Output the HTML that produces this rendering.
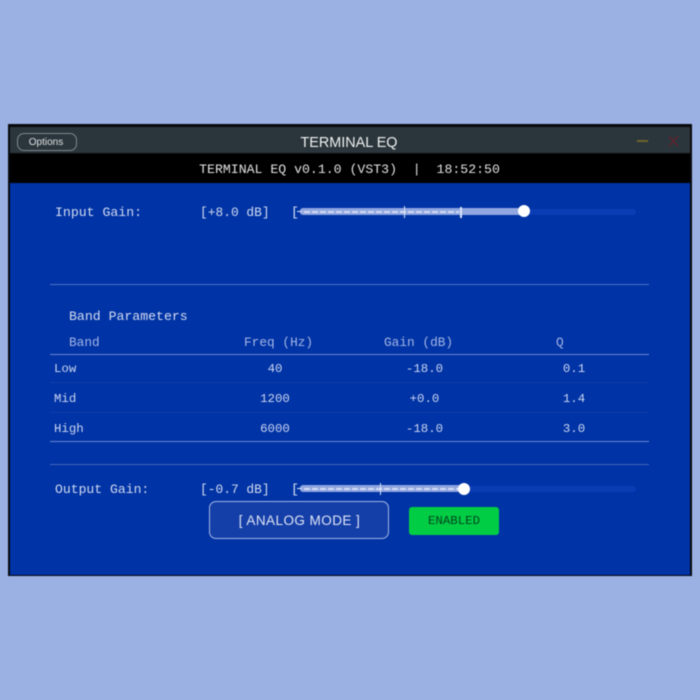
<!DOCTYPE html>
<html><head><meta charset="utf-8"><style>
html,body{margin:0;padding:0;width:700px;height:700px;overflow:hidden;background:#9bb0e3}
#w{position:absolute;left:0;top:0;width:700px;height:700px;filter:blur(.4px)}
.a{position:absolute}
.t{position:absolute;font:13.2px/16px "Liberation Mono",monospace;white-space:pre;color:#d3dcf2}
.h{font-size:12.8px;color:#a4b6e6}
.r{font-size:12.4px;color:#cbd6f2}
.v{font-size:12.9px}
.c{transform:translateX(-50%)}
.s{font-family:"Liberation Sans",sans-serif}
.l{position:absolute;left:50px;width:599px;height:1px}
.d{position:absolute;height:2px;background:repeating-linear-gradient(90deg,#d3dcf5 0 6px,#8fa6e0 6px 8px)}
</style></head><body><div id="w">
<div class="a" style="left:8.3px;top:124px;width:683.4px;height:452.3px;background:#08090c"></div>
<div class="a" style="left:9.5px;top:127px;width:680.5px;height:26px;background:#2b363c"></div>
<div class="a" style="left:9.5px;top:153.5px;width:680.5px;height:29.5px;background:#000"></div>
<div class="a" style="left:9.5px;top:183px;width:680.5px;height:391.5px;background:#0033a5"></div>

<div class="a" style="left:16.5px;top:133px;width:58px;height:16px;border:1.5px solid #7d878c;border-radius:7px"></div>
<div class="t s c" style="left:46px;top:134.5px;font-size:10px;color:#dfe3e5">Options</div>
<div class="t s c" style="left:349px;top:133.5px;font-size:14.4px;line-height:18px;color:#eef0f0">TERMINAL EQ</div>
<div class="a" style="left:637px;top:140px;width:11px;height:2px;background:#6f6428"></div>
<svg class="a" style="left:667px;top:134px" width="13" height="14"><path d="M2 2L11 12M11 2L2 12" stroke="#5e2530" stroke-width="1.6" fill="none"/></svg>
<div class="t c" style="left:349.5px;top:161.5px;color:#e2e2e2;font-size:13.2px">TERMINAL EQ v0.1.0 (VST3)  |  18:52:50</div>

<div class="t" style="left:55px;top:204.5px">Input Gain:</div>
<div class="t v" style="left:200px;top:204.5px">[+8.0 dB]</div>
<div class="a" style="left:300px;top:208.5px;width:336px;height:6px;background:#0a3cb4;border-radius:3px"></div>
<div class="a" style="left:300px;top:208px;width:224px;height:7px;background:#8fa6e0;border-radius:3px"></div>
<div class="t" style="left:291px;top:204.5px;color:#dbe3f6">[</div>
<div class="a" style="left:297px;top:211px;width:5px;height:1.4px;background:#dbe3f6"></div>
<div class="d" style="left:304px;top:210.5px;width:155px"></div>
<div class="a" style="left:404px;top:206px;width:1.3px;height:12px;background:#dbe3f6"></div>
<div class="a" style="left:460px;top:206.5px;width:2px;height:11px;background:#dbe3f6"></div>
<div class="a" style="left:518px;top:205px;width:12px;height:12px;background:#fff;border-radius:50%"></div>

<div class="l" style="top:283.5px;background:#4f70c4"></div>
<div class="t" style="left:69px;top:308.5px">Band Parameters</div>
<div class="t h" style="left:69px;top:334.5px">Band</div>
<div class="t h" style="left:244px;top:334.5px">Freq (Hz)</div>
<div class="t h" style="left:384px;top:334.5px">Gain (dB)</div>
<div class="t h" style="left:556px;top:334.5px">Q</div>
<div class="l" style="top:353.5px;background:#6a88d2"></div>

<div class="t r" style="left:54px;top:360.5px">Low</div>
<div class="t r c" style="left:275px;top:360.5px">40</div>
<div class="t r c" style="left:424.5px;top:360.5px">-18.0</div>
<div class="t r c" style="left:574px;top:360.5px">0.1</div>
<div class="l" style="top:382px;background:#0f3dab"></div>

<div class="t r" style="left:54px;top:390.5px">Mid</div>
<div class="t r c" style="left:275px;top:390.5px">1200</div>
<div class="t r c" style="left:424.5px;top:390.5px">+0.0</div>
<div class="t r c" style="left:574px;top:390.5px">1.4</div>
<div class="l" style="top:412px;background:#0f3dab"></div>

<div class="t r" style="left:54px;top:420.5px">High</div>
<div class="t r c" style="left:275px;top:420.5px">6000</div>
<div class="t r c" style="left:424.5px;top:420.5px">-18.0</div>
<div class="t r c" style="left:574px;top:420.5px">3.0</div>
<div class="l" style="top:440.5px;background:#6a88d2"></div>

<div class="l" style="top:463.5px;background:#4464bd"></div>

<div class="t" style="left:55px;top:481.5px;font-size:13.1px">Output Gain:</div>
<div class="t v" style="left:200px;top:481.5px">[-0.7 dB]</div>
<div class="a" style="left:300px;top:485.5px;width:336px;height:6px;background:#0a3cb4;border-radius:3px"></div>
<div class="a" style="left:300px;top:485px;width:164px;height:7px;background:#8fa6e0;border-radius:3px"></div>
<div class="t" style="left:291px;top:481.5px;color:#dbe3f6">[</div>
<div class="a" style="left:297px;top:488px;width:5px;height:1.4px;background:#dbe3f6"></div>
<div class="d" style="left:304px;top:487.5px;width:155px"></div>
<div class="a" style="left:380px;top:483px;width:1.3px;height:12px;background:#dbe3f6"></div>
<div class="a" style="left:458px;top:483px;width:12px;height:12px;background:#fff;border-radius:50%"></div>

<div class="a" style="left:209.3px;top:501.3px;width:178px;height:36px;background:#153fa8;border:1.5px solid #a3b6e6;border-radius:7px"></div>
<div class="t s c" style="left:299.5px;top:513.3px;font-size:13.5px;color:#dfe6f7;letter-spacing:.45px">[ ANALOG MODE ]</div>
<div class="a" style="left:409.3px;top:507.3px;width:90px;height:27.5px;background:#00cc44;border-radius:3px"></div>
<div class="t c" style="left:454px;top:513px;font-size:12.4px;color:#04451f">ENABLED</div>
</div></body></html>
